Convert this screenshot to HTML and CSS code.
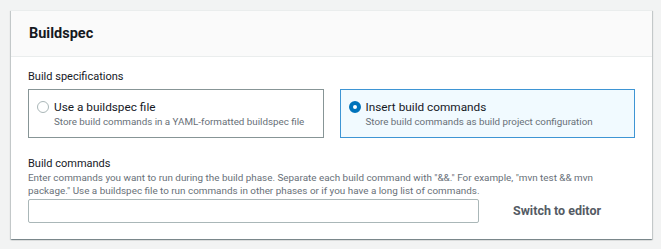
FILE: index.html
```
<!DOCTYPE html>
<html lang="en">
<head>
<meta charset="utf-8">
<title>Buildspec</title>
<link rel="stylesheet" href="styles.css">
</head>
<body>
<div class="page">
  <section class="card">
    <header class="card-header">
      <h2 class="card-title">Buildspec</h2>
    </header>
    <div class="card-body">
      <div class="field">
        <div class="field-label">Build specifications</div>
        <div class="tiles">
          <label class="tile">
            <span class="radio"></span>
            <span class="tile-text">
              <span class="tile-title">Use a buildspec file</span>
              <span class="tile-desc">Store build commands in a YAML-formatted buildspec file</span>
            </span>
          </label>
          <label class="tile tile-selected">
            <span class="radio radio-checked"></span>
            <span class="tile-text">
              <span class="tile-title">Insert build commands</span>
              <span class="tile-desc">Store build commands as build project configuration</span>
            </span>
          </label>
        </div>
      </div>
      <div class="field field-commands">
        <div class="field-label field-label-tight">Build commands</div>
        <div class="field-desc">Enter commands you want to run during the build phase. Separate each build command with "&amp;&amp;." For example, "mvn test &amp;&amp; mvn package." Use a buildspec file to run commands in other phases or if you have a long list of commands.</div>
        <div class="input-row">
          <div class="text-input"></div>
          <div class="switch-btn">Switch to editor</div>
        </div>
      </div>
    </div>
  </section>
</div>
</body>
</html>
```
FILE: styles.css
```
* { box-sizing: border-box; }
html, body { margin: 0; padding: 0; }
body {
  background: #f2f3f3;
  font-family: Roboto, "Liberation Sans", Arial, sans-serif;
  color: #16191f;
}
.page {
  padding: 10px 9px 10px 11px;
}
.card {
  width: 641px;
  background: #ffffff;
  border-top: 1px solid #eaeded;
  box-shadow: 0 1px 1px 0 rgba(0, 28, 36, 0.3), 1px 1px 1px 0 rgba(0, 28, 36, 0.15), -1px 1px 1px 0 rgba(0, 28, 36, 0.15);
}
.card-header {
  height: 46px;
  background: #fafafa;
  border-bottom: 1px solid #eaeded;
  display: flex;
  align-items: center;
  padding: 0 17px 0 18px;
}
.card-title {
  margin: 0;
  font-size: 14.5px;
  font-weight: 700;
  color: #16191f;
  line-height: 18px;
}
.card-body {
  padding: 12px 17px 16px 17px;
}
.field-label {
  font-size: 11px;
  line-height: 16px;
  color: #16191f;
}
.field-label-tight {
  line-height: 14px;
}
.tiles {
  margin-top: 4px;
  display: flex;
  gap: 16px;
}
.tile {
  flex: 1 1 0;
  height: 49px;
  border: 1px solid #879596;
  background: #ffffff;
  display: flex;
  align-items: flex-start;
  padding: 9px 8px 0 8px;
}
.tile-selected {
  border-color: #3e95d4;
  background: #f1faff;
}
.radio {
  flex: none;
  width: 12px;
  height: 12px;
  margin-top: 2px;
  border: 1px solid #aab7b8;
  border-radius: 50%;
  background: #ffffff;
}
.radio-checked {
  border: 4px solid #0073bb;
}
.tile-text {
  display: flex;
  flex-direction: column;
  margin-left: 5px;
}
.tile-title {
  font-size: 11.8px;
  line-height: 16px;
  color: #16191f;
}
.tile-desc {
  font-size: 9.8px;
  line-height: 14px;
  color: #687078;
}
.field-commands {
  margin-top: 19px;
}
.field-desc {
  max-width: 600px;
  font-size: 9.9px;
  line-height: 13px;
  color: #687078;
}
.input-row {
  margin-top: 2px;
  display: flex;
  align-items: center;
}
.text-input {
  width: 451px;
  height: 24px;
  border: 1px solid #aab7b8;
  border-radius: 2px;
  background: #ffffff;
}
.switch-btn {
  flex: 1 1 auto;
  text-align: center;
  font-size: 12.5px;
  font-weight: 700;
  color: #545b64;
  line-height: 16px;
}
```
